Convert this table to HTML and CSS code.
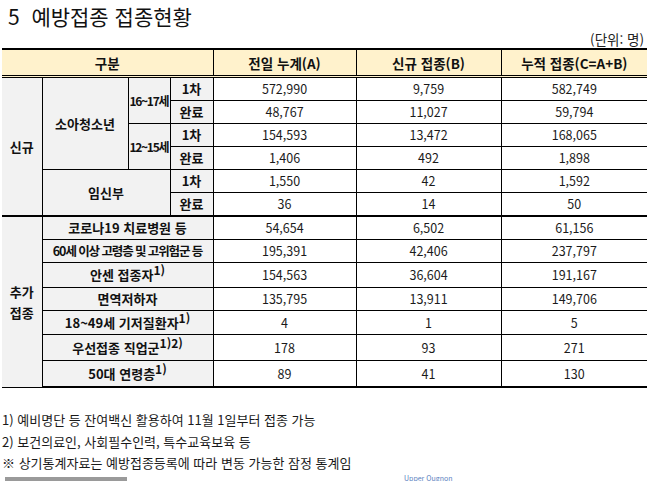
FILE: index.html
```html
<!DOCTYPE html>
<html lang="ko">
<head>
<meta charset="utf-8">
<link rel="stylesheet" href="styles.css">
</head>
<body>
<div class="page">
  <h1 class="title">5&nbsp; 예방접종 접종현황</h1>
  <div class="unit">(단위: 명)</div>
  <table class="stats">
    <colgroup>
      <col class="c1"><col class="c2"><col class="c3"><col class="c4"><col class="c5"><col class="c6"><col class="c7">
    </colgroup>
    <thead>
      <tr class="head">
        <th colspan="4">구분</th>
        <th>전일 누계(A)</th>
        <th>신규 접종(B)</th>
        <th>누적 접종(C=A+B)</th>
      </tr>
    </thead>
    <tbody>
      <tr class="r">
        <td class="lab" rowspan="6">신규</td>
        <td class="lab" rowspan="4">소아청소년</td>
        <td class="lab age" rowspan="2">16~17세</td>
        <td class="lab">1차</td>
        <td>572,990</td><td>9,759</td><td>582,749</td>
      </tr>
      <tr class="r">
        <td class="lab">완료</td>
        <td>48,767</td><td>11,027</td><td>59,794</td>
      </tr>
      <tr class="r">
        <td class="lab age" rowspan="2">12~15세</td>
        <td class="lab">1차</td>
        <td>154,593</td><td>13,472</td><td>168,065</td>
      </tr>
      <tr class="r">
        <td class="lab">완료</td>
        <td>1,406</td><td>492</td><td>1,898</td>
      </tr>
      <tr class="r">
        <td class="lab" colspan="2" rowspan="2">임신부</td>
        <td class="lab">1차</td>
        <td>1,550</td><td>42</td><td>1,592</td>
      </tr>
      <tr class="r">
        <td class="lab">완료</td>
        <td>36</td><td>14</td><td>50</td>
      </tr>
      <tr class="r sep">
        <td class="lab two" rowspan="7">추가<br>접종</td>
        <td class="lab" colspan="3">코로나19 치료병원 등</td>
        <td>54,654</td><td>6,502</td><td>61,156</td>
      </tr>
      <tr class="r">
        <td class="lab tight" colspan="3">60세 이상 고령층 및 고위험군 등</td>
        <td>195,391</td><td>42,406</td><td>237,797</td>
      </tr>
      <tr class="r tall">
        <td class="lab" colspan="3">안센 접종자<sup>1)</sup></td>
        <td>154,563</td><td>36,604</td><td>191,167</td>
      </tr>
      <tr class="r">
        <td class="lab" colspan="3">면역저하자</td>
        <td>135,795</td><td>13,911</td><td>149,706</td>
      </tr>
      <tr class="r mid">
        <td class="lab" colspan="3">18~49세 기저질환자<sup>1)</sup></td>
        <td>4</td><td>1</td><td>5</td>
      </tr>
      <tr class="r taller">
        <td class="lab" colspan="3">우선접종 직업군<sup>1)2)</sup></td>
        <td>178</td><td>93</td><td>271</td>
      </tr>
      <tr class="r taller last">
        <td class="lab" colspan="3">50대 연령층<sup>1)</sup></td>
        <td>89</td><td>41</td><td>130</td>
      </tr>
    </tbody>
  </table>
  <div class="notes">
    <p>1) 예비명단 등 잔여백신 활용하여 11월 1일부터 접종 가능</p>
    <p>2) 보건의료인, 사회필수인력, 특수교육보육 등</p>
    <p>※ 상기통계자료는 예방접종등록에 따라 변동 가능한 잠정 통계임</p>
  </div>
  <div class="foot">
    <span class="bar"></span>
    <span class="link">Upper Ougnon</span>
  </div>
</div>
</body>
</html>
```

FILE: styles.css
```css
html, body {
  margin: 0;
  padding: 0;
  background: #ffffff;
}
body {
  font-family: "Noto Sans CJK KR", "Noto Sans", sans-serif;
  color: #111;
  width: 647px;
  height: 481px;
  overflow: hidden;
}
.page {
  padding: 0 0 0 2px;
}
.title {
  margin: 0;
  padding: 3px 0 0 6px;
  font-size: 21px;
  font-weight: 400;
  line-height: 26px;
  color: #111;
}
.unit {
  text-align: right;
  font-size: 13.5px;
  line-height: 18px;
  padding-right: 3px;
  margin-top: 1px;
  color: #222;
}
.stats {
  border-collapse: collapse;
  table-layout: fixed;
  width: 645px;
  font-size: 13px;
}
.c1 { width: 40px; }
.c2 { width: 86px; }
.c3 { width: 42px; }
.c4 { width: 43px; }
.c5 { width: 143px; }
.c6 { width: 145px; }
.c7 { width: 146px; }
.stats th, .stats td {
  border: 1px solid #000;
  padding: 0;
  text-align: center;
  vertical-align: middle;
  white-space: nowrap;
  overflow: visible;
}
.stats th:first-child, .stats td:first-child { border-left: none; }
.stats th:last-child, .stats td:last-child { border-right: none; }
.head th {
  background: #fff2cc;
  font-weight: 700;
  height: 25px;
  border-top: 2px solid #000;
  border-bottom: 3px double #000;
  font-size: 13.5px;
}
.r td { height: 22px; line-height: 18px; }
.r td:not(.lab) { font-size: 12.5px; color: #1a1a1a; }
.lab {
  background: #f2f2f2;
  font-weight: 700;
}
.age {
  letter-spacing: -1.3px;
  font-size: 12px;
  text-align: left !important;
  padding-left: 1px !important;
}
.tight {
  letter-spacing: -1.1px;
  font-size: 12.5px;
}
.two { line-height: 21px !important; }
.sep td { border-top: 2px solid #000; }
.last td { border-bottom: 2px solid #000; }
.tall td { height: 24px; }
.mid td { height: 23px; }
.taller td { height: 25px; }
sup {
  font-size: 12px;
  line-height: 0;
  vertical-align: 5px;
}
.notes {
  margin-top: 21px;
  font-size: 13px;
  color: #1a1a1a;
}
.notes p {
  margin: 0;
  line-height: 21.5px;
}
.foot {
  display: flex;
  align-items: flex-start;
  margin-top: 0;
  height: 9px;
}
.bar {
  display: block;
  width: 122px;
  height: 6px;
  margin-left: 3px;
  background: #9a9a9a;
  margin-top: 3px;
}
.link {
  margin-left: 277px;
  font-size: 7px;
  line-height: 7px;
  color: #5b7fc0;
  margin-top: 1px;
}
```
